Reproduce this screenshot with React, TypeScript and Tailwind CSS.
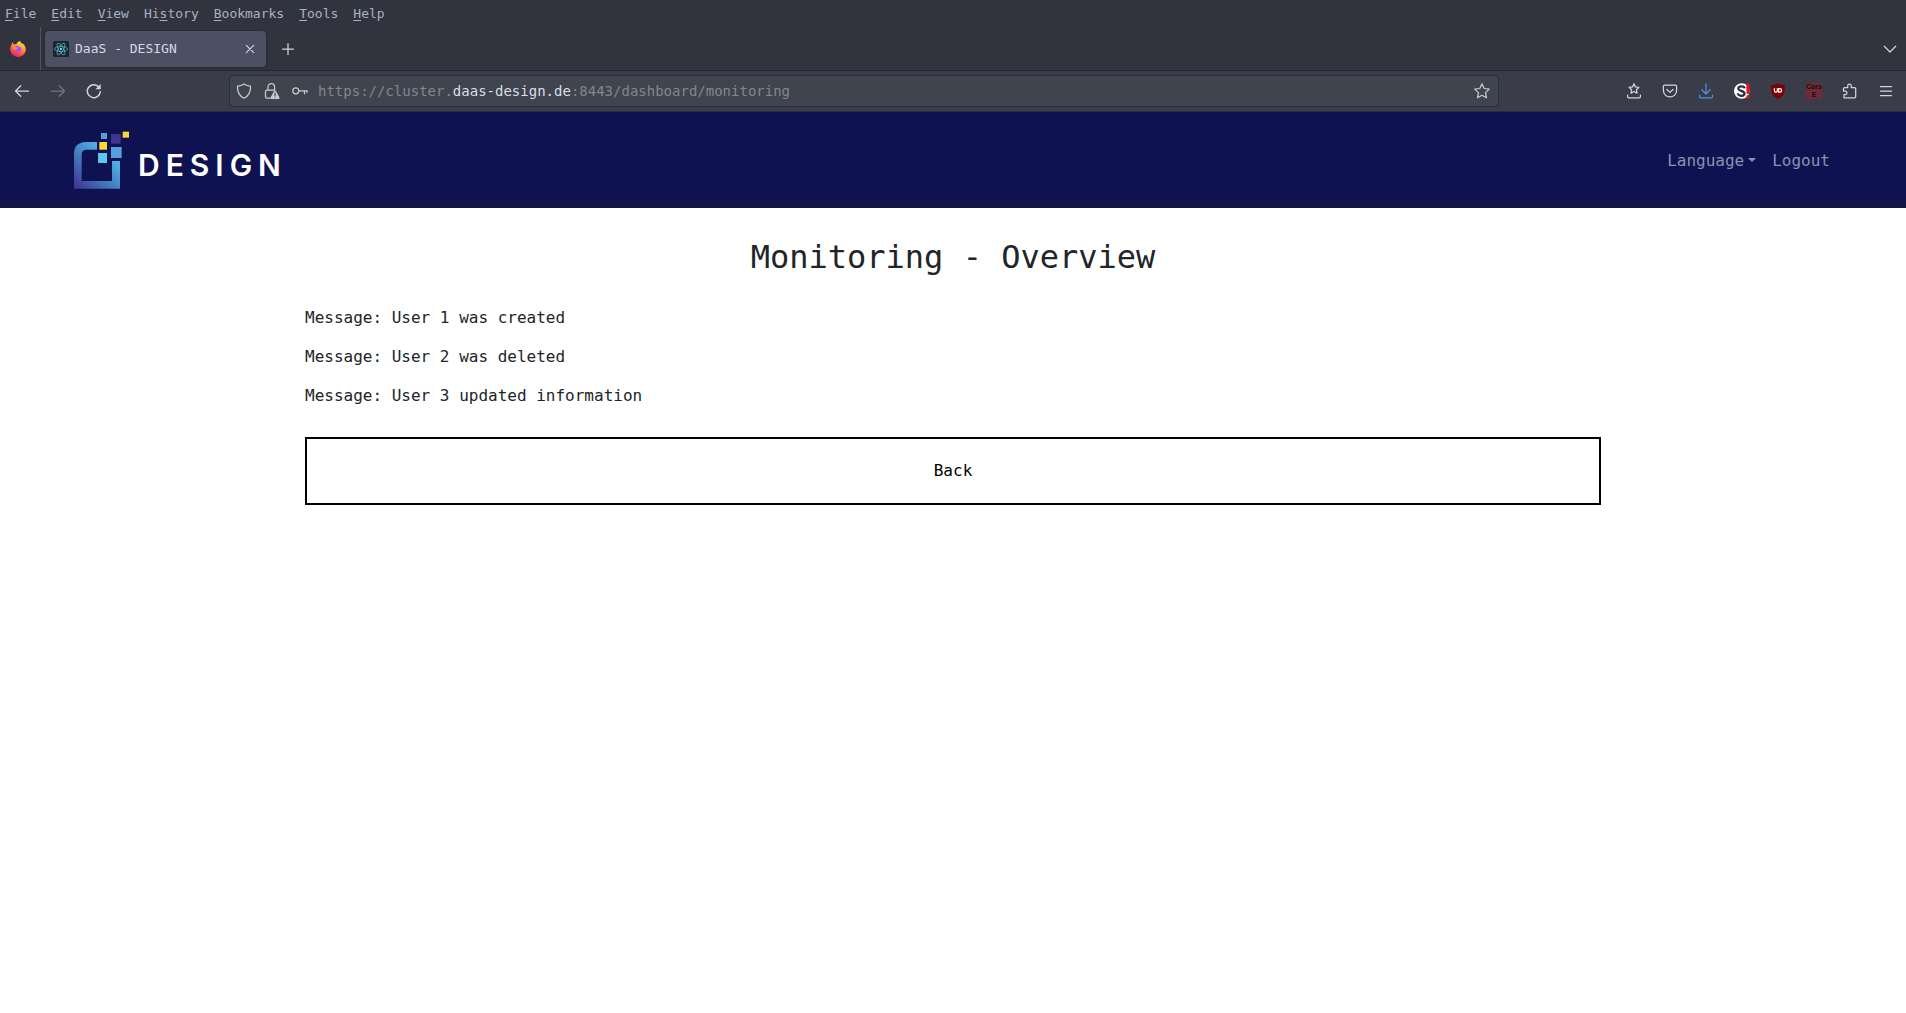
import React, { useState } from "react";

const menus = [
  { key: "F", before: "", after: "ile" },
  { key: "E", before: "", after: "dit" },
  { key: "V", before: "", after: "iew" },
  { key: "s", before: "Hi", after: "tory" },
  { key: "B", before: "", after: "ookmarks" },
  { key: "T", before: "", after: "ools" },
  { key: "H", before: "", after: "elp" },
];

const messages = [
  "User 1 was created",
  "User 2 was deleted",
  "User 3 updated information",
];

function Icon({ children, className = "size-4" }: { children: React.ReactNode; className?: string }) {
  return (
    <svg
      viewBox="0 0 16 16"
      className={className}
      fill="none"
      stroke="currentColor"
      strokeWidth="1.25"
      strokeLinecap="round"
      strokeLinejoin="round"
      aria-hidden="true"
    >
      {children}
    </svg>
  );
}

function FirefoxIcon() {
  return (
    <svg viewBox="0 0 16 16" className="size-4" aria-hidden="true">
      <defs>
        <linearGradient id="fox" x1="0.8" y1="0" x2="0.3" y2="1">
          <stop offset="0" stopColor="#fff44f" />
          <stop offset="0.35" stopColor="#ffa436" />
          <stop offset="0.7" stopColor="#ff4f4a" />
          <stop offset="1" stopColor="#e31587" />
        </linearGradient>
      </defs>
      <path
        fill="url(#fox)"
        d="M10.2 0c.2 1.3.9 2 1.9 2.8.2.2.4.4.6.7-.1-.5-.3-1-.6-1.4 2.2 1.3 3.7 3.9 3.7 6.2 0 4.3-3.5 7.6-7.8 7.6S.2 12.500.2 8.300c0-1.800.6-3.500 1.500-4.700C1.700 2.900 2 2 2.500 1.300c.2.8.7 1.500 1.300 2 .8-.2 1.700-.1 2.400.2C6.900 1.900 8.300.5 10.200 0z"
      />
      <path fill="#9059ff" d="M5 5.600c1-.6 2.500-.8 3.700-.2 1.900.3 2.700 1.700 2.500 3.100-.2 1.700-1.600 2.700-3.200 2.600-2-.1-3.200-1.500-3-3.200.7.5 1.300.7 2 .5.6-.2 1-.5 1.500-.9-.9-.3-1.600-.1-2-.6C6 6.500 5.500 6 5 5.600z" />
      <path fill="#ff8a2a" d="M2 5c1.300-.3 2.900.1 3.600 1 .5.500 1.500.3 2 .6-.2.6-.8.8-1.300 1.100-.5.300-.9.7-.8 1.400C4 8.500 2.600 7.200 2 5z" />
    </svg>
  );
}

function ReactIcon() {
  return (
    <svg viewBox="0 0 16 16" className="size-4" fill="none" stroke="#53c1de" strokeWidth="0.7" aria-hidden="true">
      <rect width="16" height="16" rx="1.500" fill="#20232a" stroke="none" />
      <ellipse cx="8" cy="8" rx="6.600" ry="2.500" />
      <ellipse cx="8" cy="8" rx="6.600" ry="2.500" transform="rotate(60 8 8)" />
      <ellipse cx="8" cy="8" rx="6.600" ry="2.500" transform="rotate(120 8 8)" />
      <circle cx="8" cy="8" r="1.200" fill="#61dafb" stroke="none" />
    </svg>
  );
}

function ShieldIcon() {
  return (
    <Icon>
      <path d="M8 .9c2 1.500 4 2 6.500 2.300.3 5-1.500 9.500-6.500 12-5-2.500-6.800-7-6.500-12C4 2.900 6 2.400 8 .9z" />
    </Icon>
  );
}

function LockWarningIcon() {
  return (
    <Icon>
      <path d="M4 7V4.300C4 2 5.500.7 7.300.7s3.300 1.300 3.300 3.600V7M6 15H2.800c-.7 0-1.300-.5-1.300-1.300V8.400c0-.8.600-1.300 1.300-1.300h7.500" />
      <path d="M11 7.500c.5 0 .7.300.9.600l3.600 6.500c.3.600-.1 1.300-.8 1.300H7.300c-.7 0-1.100-.7-.8-1.300l3.600-6.500c.2-.3.400-.6.900-.6z" fill="currentColor" stroke="none" />
      <path d="M11 10v2.400M11 14.100v.1" stroke="#40444f" />
    </Icon>
  );
}

function KeyIcon() {
  return (
    <Icon>
      <circle cx="3.800" cy="7.800" r="3" />
      <path d="M6.900 7.800h8.400M12.500 7.800v3M14.900 7.800v1.500" />
    </Icon>
  );
}

function StarIcon() {
  return (
    <Icon>
      <path d="M8 .8l2.200 4.700 5.100.6-3.800 3.500 1 5.200L8 12.300l-4.500 2.500 1-5.200L.7 6.100l5.100-.6z" />
    </Icon>
  );
}

function SaveStarIcon() {
  return (
    <Icon>
      <path d="M8 .7l1.500 3.200 3.400.4-2.500 2.400.6 3.500L8 8.500l-3 1.700.6-3.500-2.500-2.400 3.400-.4z" />
      <path d="M1.600 12v1.700c0 .7.400 1.100 1.100 1.100h10.600c.7 0 1.100-.4 1.100-1.100V12" />
    </Icon>
  );
}

function PocketIcon() {
  return (
    <Icon>
      <path d="M2.700 2h10.600c.7 0 1.300.6 1.300 1.300v4.200c0 3.700-3 6.400-6.600 6.400S1.400 11.200 1.400 7.500V3.300C1.400 2.600 2 2 2.700 2z" />
      <path d="M4.900 6.500L8 9.400l3.100-2.900" />
    </Icon>
  );
}

function DownloadIcon() {
  return (
    <Icon className="size-4 text-[#4f8fe0]">
      <path d="M8 .8v10M3.800 6.800L8 11l4.200-4.200M1.500 12v1.500c0 .8.500 1.300 1.300 1.300h10.400c.8 0 1.300-.5 1.300-1.300V12" />
    </Icon>
  );
}

function NoScriptIcon() {
  return (
    <svg viewBox="0 0 16 16" className="size-4" fill="none" aria-hidden="true">
      <circle cx="7.800" cy="8" r="7.800" fill="#fff" />
      <path d="M10.700 5.300C10.300 2.800 4.600 2.500 4.300 5.300c-.2 2.900 6.500 2.200 6.300 5.400-.3 3-6.300 2.700-6.900-.3" stroke="#2b2d3f" strokeWidth="2.200" />
      <rect x="12.400" y=".5" width="3.200" height="10.500" rx="1.400" fill="#e0141c" />
      <rect x="12.400" y="12" width="3.200" height="3.500" rx="1.500" fill="#e0141c" />
    </svg>
  );
}

function BlockerIcon() {
  return (
    <svg viewBox="0 0 16 16" className="size-4" fill="none" aria-hidden="true">
      <path d="M8 .3c2 1.200 4.300 1.900 6.700 2v5c0 4.200-2.800 6.800-6.700 8.600C4.100 14.100 1.300 11.500 1.300 7.300v-5c2.400-.1 4.700-.8 6.700-2z" fill="#800000" />
      <path d="M4.400 5.300v2.400c0 1.900 2.900 1.900 2.900 0V5.300" stroke="#fff" strokeWidth="1.200" />
      <path d="M8.600 5.700h1.300c2.300 0 2.300 3.400 0 3.400H8.600z" stroke="#fff" strokeWidth="1.200" />
    </svg>
  );
}

function PuzzleIcon() {
  return (
    <Icon>
      <path d="M2 14.800V11.500h1.300a1.700 1.700 0 0 0 0-3.400H1.500V5.700c0-.6.400-1 1-1h3.200V2.900a1.800 1.800 0 0 1 3.600 0v1.800h3.200c.7 0 1.200.4 1.200 1.100v7.900c0 .7-.5 1.100-1.200 1.100z" />
    </Icon>
  );
}

function LogoMark() {
  return (
    <svg viewBox="39 60 171 180" className="h-[60px] w-[57px]" aria-hidden="true">
      <defs>
        <linearGradient id="frame" gradientUnits="userSpaceOnUse" x1="50" y1="232" x2="145" y2="130">
          <stop offset="0" stopColor="#403795" />
          <stop offset="0.5" stopColor="#4179ba" />
          <stop offset="1" stopColor="#51b2e4" />
        </linearGradient>
      </defs>
      <path fill="url(#frame)" d="M111 96H77Q42 98 42 131V236H180V153H156V213H65V131Q66 120 77 119H111Z" />
      <rect x="123" y="69" width="18" height="18" fill="#56a0dc" />
      <rect x="153" y="72" width="29" height="29" fill="#40358c" />
      <rect x="188" y="65" width="19" height="18" fill="#fdd835" />
      <rect x="118" y="96" width="23" height="23" fill="#fdd835" />
      <rect x="153" y="111" width="32" height="33" fill="#559fdb" />
      <rect x="114" y="129" width="27" height="30" fill="#5cc6ef" />
    </svg>
  );
}

function ToolButton({ label, className = "", children }: { label: string; className?: string; children: React.ReactNode }) {
  return (
    <button type="button" aria-label={label} className={`flex h-8 w-9 shrink-0 items-center justify-center ${className}`}>
      {children}
    </button>
  );
}

function MenuBar() {
  return (
    <nav aria-label="Application menu" className="flex h-[27px] items-center gap-[15px] px-[5px] text-[13px] leading-5 text-[#a9b1c2]">
      {menus.map((m) => (
        <button type="button" key={m.key}>
          {m.before}
          <span className="underline underline-offset-2">{m.key}</span>
          {m.after}
        </button>
      ))}
    </nav>
  );
}

function TabStrip() {
  return (
    <div className="flex h-11 items-center border-b border-[#25272f]">
      <div className="flex h-full w-[41px] items-center border-r border-[#50535f] pl-[10px]">
        <FirefoxIcon />
      </div>
      <div className="ml-1 flex h-9 w-[221px] items-center rounded bg-[#4c5063] pr-2 pl-2 text-[13px] text-[#d3dae3] shadow-[0_0_3px_rgba(0,0,0,0.4)]">
        <ReactIcon />
        <span className="ml-1.5 flex-1">DaaS - DESIGN</span>
        <button type="button" aria-label="Close tab">
          <Icon>
            <path d="M4.300 4.300l7.400 7.400M11.700 4.300l-7.400 7.400" strokeWidth="1.100" />
          </Icon>
        </button>
      </div>
      <ToolButton label="New tab" className="ml-1">
        <Icon>
          <path d="M8 2.500v11M2.500 8h11" />
        </Icon>
      </ToolButton>
      <ToolButton label="List all tabs" className="ml-auto -mr-0.5">
        <Icon>
          <path d="M2.300 5.300L8 11l5.700-5.700" />
        </Icon>
      </ToolButton>
    </div>
  );
}

function AddressBar() {
  const [url, setUrl] = useState("https://cluster.daas-design.de:8443/dashboard/monitoring");
  const host = "daas-design.de";
  const at = url.indexOf(host);
  return (
    <div className="flex h-8 min-w-0 flex-1 items-center rounded border border-[#2a2c37] bg-[#40444f] px-1.5 text-[#c6cbd6]">
      <ShieldIcon />
      <span className="ml-3">
        <LockWarningIcon />
      </span>
      <span className="ml-3">
        <KeyIcon />
      </span>
      <div className="relative ml-2.5 min-w-0 flex-1 text-[14px] leading-6 whitespace-pre">
        <div aria-hidden="true" className="overflow-hidden text-[#83868f]">
          {at < 0 ? url : url.slice(0, at)}
          {at >= 0 && <span className="text-[#d8dde8]">{host}</span>}
          {at >= 0 && url.slice(at + host.length)}
        </div>
        <input
          type="text"
          aria-label="Address"
          value={url}
          onChange={(e) => setUrl(e.target.value)}
          className="absolute inset-0 w-full bg-transparent text-transparent caret-white outline-none"
        />
      </div>
      <button type="button" aria-label="Bookmark this page" className="px-0.5">
        <StarIcon />
      </button>
    </div>
  );
}

function Toolbar() {
  return (
    <div className="flex h-[41px] items-center border-b border-[#2c2e39] bg-[#3a3c49] pr-0.5 pl-1 text-[#d0d5e0]">
      <ToolButton label="Back">
        <Icon>
          <path d="M14.500 8H1.500M6.800 2.700L1.500 8l5.300 5.300" />
        </Icon>
      </ToolButton>
      <ToolButton label="Forward" className="text-[#72757f]">
        <Icon>
          <path d="M1.500 8h13M9.200 2.700L14.500 8l-5.300 5.300" />
        </Icon>
      </ToolButton>
      <ToolButton label="Reload">
        <Icon>
          <path d="M14.300 8.800A6.500 6.500 0 1 1 12.300 3.500" strokeWidth="1.500" />
          <path d="M14.700 1v5.300H9.400z" fill="currentColor" stroke="none" />
        </Icon>
      </ToolButton>
      <div className="w-[117px]" />
      <AddressBar />
      <div className="w-[117px]" />
      <ToolButton label="Save to bookmarks">
        <SaveStarIcon />
      </ToolButton>
      <ToolButton label="Save to Pocket">
        <PocketIcon />
      </ToolButton>
      <ToolButton label="Downloads">
        <DownloadIcon />
      </ToolButton>
      <ToolButton label="Script blocker">
        <NoScriptIcon />
      </ToolButton>
      <ToolButton label="Content blocker">
        <BlockerIcon />
      </ToolButton>
      <ToolButton label="CORS Everywhere">
        <span className="flex size-4 flex-col items-center bg-[#6e2c37] font-['Liberation_Sans',sans-serif] text-[7px] leading-[8px] font-bold text-[#190d13]">
          <span>Cors</span>
          <span>E</span>
        </span>
      </ToolButton>
      <ToolButton label="Extensions">
        <PuzzleIcon />
      </ToolButton>
      <ToolButton label="Open application menu">
        <Icon>
          <path d="M2.500 3.500h11M2.500 8h11M2.500 12.500h11" />
        </Icon>
      </ToolButton>
    </div>
  );
}

function SiteHeader() {
  return (
    <header className="flex h-24 items-start justify-between border-b-8 border-[#121546] bg-[#0e1251] pr-[68px] pl-[73px]">
      <a href="#home" className="flex items-end pt-[18px]">
        <LogoMark />
        <span className="ml-2 pb-[7px] font-['Inter',sans-serif] text-[30px] leading-9 font-semibold tracking-[6px] text-white">DESIGN</span>
      </a>
      <nav className="flex pt-[37px] text-base leading-6 text-[#8d90b0]">
        <button type="button" aria-haspopup="menu" className="flex items-center gap-1 px-2">
          Language
          <span className="mb-0.5 border-x-4 border-t-4 border-x-transparent border-t-current" />
        </button>
        <a href="#logout" className="px-2">
          Logout
        </a>
      </nav>
    </header>
  );
}

export default function App() {
  return (
    <div className="min-h-screen bg-white font-['DejaVu_Sans_Mono',monospace] text-base text-[#212529]">
      <div className="bg-[#31343f] text-[#d0d5e0]">
        <MenuBar />
        <TabStrip />
        <Toolbar />
      </div>
      <SiteHeader />
      <main className="mx-auto max-w-[1320px] px-3 pt-[29px]">
        <h1 className="text-center text-[32px] leading-10">Monitoring - Overview</h1>
        <div className="mt-[29px] flex flex-col gap-[15px] leading-6">
          {messages.map((m) => (
            <p key={m}>Message: {m}</p>
          ))}
        </div>
        <button type="button" className="mt-[29px] w-full border-2 border-black py-5 leading-6 text-black">
          Back
        </button>
      </main>
    </div>
  );
}
